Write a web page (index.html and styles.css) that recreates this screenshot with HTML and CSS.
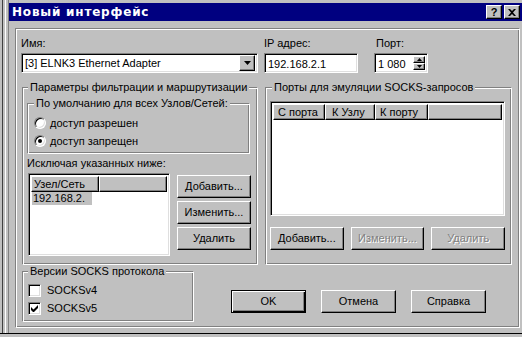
FILE: index.html
```html
<!DOCTYPE html>
<html lang="ru">
<head>
<meta charset="utf-8">
<title>Новый интерфейс</title>
<link rel="stylesheet" href="styles.css">
</head>
<body>
<div class="screen">
  <div class="edge"></div>
  <div class="window">
    <div class="titlebar">
      <span class="title">Новый интерфейс</span>
      <div class="tbtns">
        <span class="tbtn raised">?</span>
        <span class="tbtn raised">
          <svg width="8" height="7" viewBox="0 0 8 7"><path d="M0 0h2l2 2 2-2h2L5 3.5 8 7H6L4 5 2 7H0l3-3.5z" fill="#000"/></svg>
        </span>
      </div>
    </div>
    <div class="panel etched">
      <div class="top-row">
        <div class="f-name">
          <div class="label">Имя:</div>
          <div class="combo sunken">
            <span class="combo-text">[3] ELNK3 Ethernet Adapter</span>
            <span class="drop raised"><svg width="7" height="4" viewBox="0 0 7 4"><path d="M0 0h7L3.5 4z" fill="#000"/></svg></span>
          </div>
        </div>
        <div class="f-ip">
          <div class="label">IP адрес:</div>
          <div class="edit sunken">192.168.2.1</div>
        </div>
        <div class="f-port">
          <div class="label">Порт:</div>
          <div class="edit sunken port-edit">
            <span class="port-text">1 080</span>
            <span class="spin">
              <span class="spin-btn raised"><svg width="5" height="3" viewBox="0 0 5 3"><path d="M0 3h5L2.5 0z" fill="#000"/></svg></span>
              <span class="spin-btn raised"><svg width="5" height="3" viewBox="0 0 5 3"><path d="M0 0h5L2.5 3z" fill="#000"/></svg></span>
            </span>
          </div>
        </div>
      </div>

      <div class="mid-row">
        <fieldset class="group g-filter etched">
          <legend>Параметры фильтрации и маршрутизации</legend>
          <fieldset class="group g-default etched">
            <legend>По умолчанию для всех Узлов/Сетей:</legend>
            <div class="opt"><span class="radio"></span><span>доступ разрешен</span></div>
            <div class="opt"><span class="radio on"></span><span>доступ запрещен</span></div>
          </fieldset>
          <div class="except-label">Исключая указанных ниже:</div>
          <div class="except-row">
            <div class="listview lv-hosts sunken">
              <div class="lv-head">
                <span class="hcell raised w-host">Узел/Сеть</span>
                <span class="hcell raised h-rest"></span>
              </div>
              <div class="lv-item"><span class="sel">192.168.2.</span></div>
            </div>
            <div class="btn-col">
              <span class="btn raised">Добавить...</span>
              <span class="btn raised">Изменить...</span>
              <span class="btn raised">Удалить</span>
            </div>
          </div>
        </fieldset>

        <fieldset class="group g-ports etched">
          <legend>Порты для эмуляции SOCKS-запросов</legend>
          <div class="listview lv-ports sunken">
            <div class="lv-head">
              <span class="hcell raised w-from">С порта</span>
              <span class="hcell raised w-node">К Узлу</span>
              <span class="hcell raised w-port">К порту</span>
              <span class="hcell raised h-rest"></span>
            </div>
          </div>
          <div class="btn-row">
            <span class="btn raised">Добавить...</span>
            <span class="btn raised disabled">Изменить...</span>
            <span class="btn raised disabled">Удалить</span>
          </div>
        </fieldset>
      </div>

      <div class="bottom-row">
        <fieldset class="group g-ver etched">
          <legend>Версии SOCKS протокола</legend>
          <div class="opt"><span class="check"></span><span>SOCKSv4</span></div>
          <div class="opt"><span class="check"><svg width="7" height="7" viewBox="0 0 7 7"><path d="M0 2v3l2 2h1l4-4V0L2.5 4.5z" fill="#000"/></svg></span><span>SOCKSv5</span></div>
        </fieldset>
        <div class="dlg-btns">
          <span class="btn raised default">OK</span>
          <span class="btn raised">Отмена</span>
          <span class="btn raised">Справка</span>
        </div>
      </div>
    </div>
  </div>
</div>
</body>
</html>
```

FILE: styles.css
```css
* { box-sizing: border-box; }
html, body { margin: 0; padding: 0; }
body {
  width: 522px;
  height: 337px;
  overflow: hidden;
  background: #c0c0c0;
  font-family: "Liberation Sans", Arial, sans-serif;
  font-size: 11px;
  color: #000;
}
.screen {
  display: flex;
  width: 522px;
  height: 334px;
  background: #c0c0c0;
  border-bottom: 1px solid #000;
}
.edge {
  flex: none;
  width: 9px;
  background: linear-gradient(to right, #c0c0c0 0 2px, #404040 2px 3px, #c0c0c0 3px 5px, #fff 5px 6px, #c0c0c0 6px 8px, #808080 8px 9px);
}
.window {
  flex: 1;
  display: flex;
  flex-direction: column;
  padding-top: 3px;
}
.titlebar {
  height: 18px;
  background: #000080;
  display: flex;
  align-items: center;
  justify-content: space-between;
  padding: 0 2px 0 3px;
}
.title {
  color: #fff;
  font-family: "DejaVu Sans", sans-serif;
  font-weight: bold;
  font-size: 12px;
  letter-spacing: 0.8px;
}
.tbtns { display: flex; gap: 2px; }
.tbtn {
  width: 16px;
  height: 14px;
  display: flex;
  align-items: center;
  justify-content: center;
  font-weight: bold;
  font-size: 11px;
  line-height: 12px;
}

/* 3D borders */
.raised {
  background: #c0c0c0;
  border: 1px solid;
  border-color: #fff #000 #000 #fff;
  box-shadow: inset -1px -1px #808080;
}
.sunken {
  background: #fff;
  border: 1px solid;
  border-color: #808080 #fff #fff #808080;
  box-shadow: inset 1px 1px #000, inset -1px -1px #dfdfdf;
}
.etched {
  border: 1px solid;
  border-color: #808080 #fff #fff #808080;
  box-shadow: inset 1px 1px #fff, inset -1px -1px #808080;
}

.panel {
  margin: 7px 0 0 6px;
  width: 505px;
  height: 300px;
  padding: 8px 5px 0 5px;
}

/* top row */
.top-row { display: flex; }
.label { height: 13px; line-height: 13px; margin-bottom: 3px; }
.f-name { width: 237px; }
.f-ip { width: 94px; margin-left: 6px; }
.f-port { width: 60px; margin-left: 16px; }
.f-port .label { padding-left: 2px; }
.combo {
  height: 20px;
  display: flex;
  align-items: center;
  justify-content: space-between;
  padding: 2px;
}
.combo-text { padding-left: 1px; line-height: 16px; }
.drop {
  width: 16px;
  height: 16px;
  display: flex;
  align-items: center;
  justify-content: center;
}
.edit {
  height: 20px;
  line-height: 16px;
  padding: 2px 3px;
}
.port-edit {
  width: 54px;
  display: flex;
  justify-content: space-between;
  padding-right: 2px;
}
.spin { display: flex; flex-direction: column; }
.spin-btn {
  width: 12px;
  height: 8px;
  display: flex;
  align-items: center;
  justify-content: center;
}

/* groups */
fieldset.group {
  margin: 0;
  min-width: 0;
}
fieldset.group legend {
  padding: 0 2px;
  line-height: 13px;
  height: 13px;
  background: #c0c0c0;
}
.mid-row {
  display: flex;
  gap: 7px;
  margin-top: 8px;
  padding-left: 1px;
}
.g-filter {
  width: 236px;
  height: 184px;
  padding: 3px 6px 0 4px;
}
.g-filter > legend { margin-left: 1px; }
.g-default {
  padding: 4px 4px 3px 6px;
  width: 223px;
}
.opt {
  height: 18px;
  display: flex;
  align-items: center;
  gap: 4px;
}
.radio {
  width: 12px;
  height: 12px;
  border-radius: 50%;
  background: #fff;
  border: 1px solid;
  border-color: #808080 #fff #fff #808080;
  box-shadow: inset 1px 1px #000, inset -1px -1px #dfdfdf;
  position: relative;
  flex: none;
}
.radio.on::after {
  content: "";
  position: absolute;
  left: 3px;
  top: 3px;
  width: 4px;
  height: 4px;
  border-radius: 50%;
  background: #000;
}
.except-label { margin-top: 3px; line-height: 13px; height: 13px; }
.except-row { display: flex; margin-top: 3px; }
.listview {
  padding: 2px;
  display: flex;
  flex-direction: column;
}
.lv-hosts { width: 142px; height: 83px; margin-left: 1px; }
.lv-head { display: flex; height: 16px; flex: none; }
.hcell {
  height: 16px;
  line-height: 14px;
  padding-left: 4px;
  white-space: nowrap;
  overflow: hidden;
}
.h-rest { flex: 1; }
.w-host { width: 68px; padding-left: 2px; }
.w-from { width: 52px; }
.w-node { width: 50px; padding-left: 6px; }
.w-port { width: 53px; padding-left: 4px; }
.lv-item { height: 13px; line-height: 13px; padding-left: 1px; }
.sel { background: #c0c0c0; padding: 0 1px; display: inline-block; width: 60px; }
.btn-col {
  display: flex;
  flex-direction: column;
  gap: 3px;
  margin-left: 7px;
  margin-top: 2px;
}
.btn {
  width: 74px;
  height: 23px;
  display: flex;
  align-items: center;
  justify-content: center;
  line-height: 13px;
}
.btn.disabled {
  color: #808080;
  text-shadow: 1px 1px #fff;
}
.btn.default {
  border-color: #000;
  box-shadow: inset 1px 1px #fff, inset -1px -1px #000, inset -2px -2px #808080;
}

.g-ports {
  width: 247px;
  height: 184px;
  padding: 7px 6px 0 4px;
}
.g-ports > legend { margin-left: 2px; }
.lv-ports { width: 235px; height: 115px; }
.btn-row { display: flex; gap: 7px; margin-top: 11px; }

.bottom-row { display: flex; padding-left: 1px; }
.g-ver {
  width: 172px;
  height: 57px;
  padding: 3px 4px 0 5px;
}
.g-ver .opt { gap: 6px; }
.check {
  width: 13px;
  height: 13px;
  flex: none;
  background: #fff;
  border: 1px solid;
  border-color: #808080 #fff #fff #808080;
  box-shadow: inset 1px 1px #000, inset -1px -1px #dfdfdf;
  display: flex;
  align-items: center;
  justify-content: center;
}
.dlg-btns {
  display: flex;
  gap: 15px;
  margin: 25px 0 0 37px;
}
.dlg-btns .btn { width: 75px; }
```
